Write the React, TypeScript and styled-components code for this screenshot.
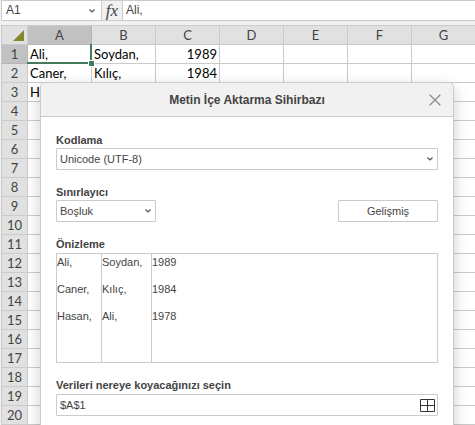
import React, { useState } from "react";
import styled, { createGlobalStyle } from "styled-components";

const GlobalStyle = createGlobalStyle`
  *, *::before, *::after { box-sizing: border-box; }
  body {
    margin: 0;
    background: #f1f1f1;
    color: #444;
    font: 11px/15px "Liberation Sans", Arial, sans-serif;
  }
  button, input, select { font: inherit; color: inherit; margin: 0; }
`;

const line = "#cbcbcb";
const sheetFont = `Lato, "Open Sans", sans-serif`;

const Page = styled.main`
  position: relative;
  height: 100vh;
  overflow: hidden;
`;

const FormulaBar = styled.div`
  display: flex;
  height: 21px;
  margin-left: 1px;
  border: solid ${line};
  border-width: 1px 0 1px 1px;
`;

const NameBox = styled.label`
  display: flex;
  align-items: center;
  width: 100px;
  padding: 0 6px 0 4px;
  background: #fff;
  border-right: 1px solid ${line};
`;

const NameInput = styled.input`
  flex: 1;
  min-width: 0;
  padding: 0;
  border: 0;
  outline: 0;
  background: transparent;
  font-size: 12px;
`;

const FunctionButton = styled.button`
  width: 21px;
  padding: 0;
  border: 0;
  border-right: 1px solid ${line};
  background: #f1f1f1;
  font: italic 17px/17px "Liberation Serif", serif;
`;

const FormulaInput = styled.input`
  flex: 1;
  min-width: 0;
  padding: 0 3px;
  border: 0;
  outline: 0;
  background: #fff;
  font-size: 12px;
`;

const Grid = styled.table`
  width: 100%;
  margin: 4px 0 0 1px;
  border-collapse: separate;
  border-spacing: 0;
  table-layout: fixed;
  border: solid ${line};
  border-width: 1px 0 0 1px;
  background: #fff;
  color: #000;
  font: 13px/18px ${sheetFont};
`;

const RowNumberCol = styled.col`
  width: 26px;
`;

const HeadCell = styled.th<{ $active?: boolean }>`
  height: 19px;
  padding: 0;
  border: solid ${(p) => (p.$active ? "#b5b5b5" : line)};
  border-width: 0 1px 1px 0;
  background: ${(p) => (p.$active ? "#c1c1c1" : "#e1e1e1")};
  color: #444;
  font-weight: 400;
`;

const Corner = styled(HeadCell)`
  vertical-align: top;
`;

const CornerMark = styled.svg`
  display: block;
  margin: 4px 0 0 11px;
`;

const Cell = styled.td<{ $numeric?: boolean }>`
  position: relative;
  height: 19px;
  padding: 0 2px;
  border: solid ${line};
  border-width: 0 1px 1px 0;
  white-space: nowrap;
  text-align: ${(p) => (p.$numeric ? "right" : "left")};
`;

const Selection = styled.span`
  position: absolute;
  z-index: 1;
  inset: -1px -1px -1px -1px;
  border: solid #457b5d;
  border-width: 0 2px 2px 0;

  &::after {
    content: "";
    position: absolute;
    right: -5px;
    bottom: -5px;
    width: 7px;
    height: 7px;
    border: 1px solid #fff;
    background: #457b5d;
  }
`;

const Dialog = styled.section`
  position: absolute;
  z-index: 2;
  top: 82px;
  left: 40px;
  right: 21px;
  border: 1px solid ${line};
  border-radius: 5px;
  background: #fff;
  box-shadow: 0 5px 15px rgba(0, 0, 0, 0.2);
`;

const DialogHeader = styled.header`
  display: flex;
  align-items: center;
  height: 34px;
  padding: 0 12px 0 24px;
  border-bottom: 1px solid ${line};
  border-radius: 5px 5px 0 0;
  background: #f1f1f1;
`;

const DialogTitle = styled.h1`
  flex: 1;
  margin: 0;
  font-size: 12px;
  line-height: 16px;
  text-align: center;
`;

const CloseButton = styled.button`
  display: grid;
  place-items: center;
  width: 12px;
  height: 12px;
  padding: 0;
  border: 0;
  background: transparent;
`;

const DialogBody = styled.div`
  display: flex;
  flex-direction: column;
  gap: 14px;
  padding: 15px 15px 24px;
`;

const Field = styled.div`
  display: flex;
  flex-direction: column;
`;

const Caption = styled.label`
  height: 16px;
  line-height: 16px;
  font-weight: 700;
`;

const Controls = styled.div`
  display: flex;
  justify-content: space-between;
`;

const SelectWrap = styled.div<{ $short?: boolean }>`
  display: grid;
  width: ${(p) => (p.$short ? "100px" : "100%")};
`;

const Select = styled.select`
  grid-area: 1 / 1;
  width: 100%;
  height: 22px;
  padding: 0 20px 0 3px;
  border: 1px solid ${line};
  border-radius: 1px;
  appearance: none;
  background: #fff;
`;

const SelectArrow = styled.span`
  grid-area: 1 / 1;
  place-self: center end;
  display: flex;
  margin-right: 5px;
  pointer-events: none;
`;

const Button = styled.button`
  width: 100px;
  height: 22px;
  padding: 0;
  border: 1px solid ${line};
  border-radius: 1px;
  background: #fff;
`;

const Preview = styled.div`
  height: 110px;
  margin-top: 1px;
  border: 1px solid ${line};
`;

const PreviewTable = styled.table`
  width: 100%;
  border-collapse: separate;
  border-spacing: 0;
  table-layout: fixed;
`;

const PreviewCol = styled.col<{ $width?: number }>`
  width: ${(p) => (p.$width ? `${p.$width}px` : "auto")};
`;

const PreviewCell = styled.td`
  height: 27px;
  padding: 0;
  vertical-align: top;
  white-space: nowrap;
  line-height: 16px;

  &:not(:last-child) {
    border-right: 1px solid ${line};
  }
`;

const RangeBox = styled.div`
  display: flex;
  align-items: center;
  height: 22px;
  margin-top: 1px;
  padding: 0 2px 0 3px;
  border: 1px solid ${line};
  border-radius: 1px;
`;

const RangeInput = styled.input`
  flex: 1;
  min-width: 0;
  padding: 0;
  border: 0;
  outline: 0;
`;

const RangeButton = styled.button`
  display: flex;
  padding: 0;
  border: 0;
  background: transparent;
`;

const Chevron = () => (
  <svg width="6" height="4" viewBox="0 0 6 4" aria-hidden="true">
    <path d="M0.5 0.6 3 2.9 5.5 0.6" fill="none" stroke="#555" strokeWidth="1.3" />
  </svg>
);

const columns = ["A", "B", "C", "D", "E", "F", "G"];
const records = [
  ["Ali,", "Soydan,", "1989"],
  ["Caner,", "Kılıç,", "1984"],
  ["Hasan,", "Ali,", "1978"],
];
const sheet = [records[0], records[1], ["Hasan,"]];
const rowNumbers = Array.from({ length: 20 }, (_, i) => i + 1);

export default function App() {
  const [range, setRange] = useState("$A$1");

  return (
    <Page>
      <GlobalStyle />
      <FormulaBar>
        <NameBox>
          <NameInput aria-label="Ad kutusu" defaultValue="A1" />
          <Chevron />
        </NameBox>
        <FunctionButton type="button">fx</FunctionButton>
        <FormulaInput aria-label="Formül" defaultValue="Ali," />
      </FormulaBar>

      <Grid>
        <colgroup>
          <RowNumberCol />
          {columns.map((c) => (
            <col key={c} />
          ))}
        </colgroup>
        <thead>
          <tr>
            <Corner>
              <CornerMark width="12" height="12" viewBox="0 0 12 12" aria-hidden="true">
                <path d="M11 0V11H0Z" fill="#85872b" />
              </CornerMark>
            </Corner>
            {columns.map((c) => (
              <HeadCell key={c} scope="col" $active={c === "A"}>
                {c}
              </HeadCell>
            ))}
          </tr>
        </thead>
        <tbody>
          {rowNumbers.map((n) => (
            <tr key={n}>
              <HeadCell scope="row" $active={n === 1}>
                {n}
              </HeadCell>
              {columns.map((c, i) => (
                <Cell key={c} $numeric={i === 2}>
                  {sheet[n - 1]?.[i]}
                  {n === 1 && i === 0 && <Selection />}
                </Cell>
              ))}
            </tr>
          ))}
        </tbody>
      </Grid>

      <Dialog role="dialog" aria-labelledby="wizard-title">
        <DialogHeader>
          <DialogTitle id="wizard-title">Metin İçe Aktarma Sihirbazı</DialogTitle>
          <CloseButton type="button" aria-label="Kapat">
            <svg width="12" height="12" viewBox="0 0 12 12" aria-hidden="true">
              <path d="M0.7 0.7 11.3 11.3M11.3 0.7 0.7 11.3" fill="none" stroke="#8c8c8c" strokeWidth="1.3" />
            </svg>
          </CloseButton>
        </DialogHeader>

        <DialogBody>
          <Field>
            <Caption htmlFor="encoding">Kodlama</Caption>
            <SelectWrap>
              <Select id="encoding">
                <option>Unicode (UTF-8)</option>
              </Select>
              <SelectArrow>
                <Chevron />
              </SelectArrow>
            </SelectWrap>
          </Field>

          <Field>
            <Caption htmlFor="delimiter">Sınırlayıcı</Caption>
            <Controls>
              <SelectWrap $short>
                <Select id="delimiter">
                  <option>Boşluk</option>
                </Select>
                <SelectArrow>
                  <Chevron />
                </SelectArrow>
              </SelectWrap>
              <Button type="button">Gelişmiş</Button>
            </Controls>
          </Field>

          <Field>
            <Caption as="span" id="preview-label">Önizleme</Caption>
            <Preview>
              <PreviewTable aria-labelledby="preview-label">
                <colgroup>
                  <PreviewCol $width={45} />
                  <PreviewCol $width={50} />
                  <PreviewCol />
                </colgroup>
                <tbody>
                  {[...records, ["", "", ""]].map((row, r) => (
                    <tr key={r}>
                      {row.map((value, i) => (
                        <PreviewCell key={i}>{value}</PreviewCell>
                      ))}
                    </tr>
                  ))}
                </tbody>
              </PreviewTable>
            </Preview>
          </Field>

          <Field>
            <Caption htmlFor="range">Verileri nereye koyacağınızı seçin</Caption>
            <RangeBox>
              <RangeInput id="range" value={range} onChange={(e) => setRange(e.target.value)} />
              <RangeButton type="button" aria-label="Veri seç">
                <svg width="15" height="13" viewBox="0 0 15 13" aria-hidden="true">
                  <path d="M0.5 0.5H14.5V12.5H0.5ZM7.5 0.5V12.5M0.5 6.5H14.5" fill="none" stroke="#333" />
                </svg>
              </RangeButton>
            </RangeBox>
          </Field>
        </DialogBody>
      </Dialog>
    </Page>
  );
}
